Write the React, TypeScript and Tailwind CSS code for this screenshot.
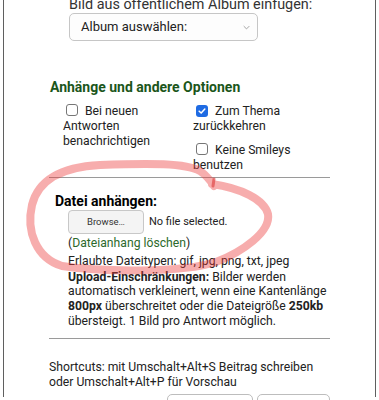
import React from 'react';

function Box({ checked = false }: { checked?: boolean }) {
  return checked ? (
    <span className="mr-[7px] ml-[3px] inline-flex h-[12px] w-[12px] items-center justify-center rounded-[3px] bg-[#1f6be3] align-[-1px]">
      <svg viewBox="0 0 12 12" className="h-[10px] w-[10px]" fill="none">
        <path d="M2.6 6.2 5 8.5 9.4 3.6" stroke="white" strokeWidth="1.8" strokeLinecap="round" strokeLinejoin="round" />
      </svg>
    </span>
  ) : (
    <span className="mr-[7px] ml-[3px] inline-block h-[12px] w-[12px] rounded-[3px] border border-[#767676] bg-white align-[-1px]" />
  );
}

export default function App() {
  return (
    <div className="relative h-[400px] w-[379px] overflow-hidden bg-white font-['Roboto',sans-serif] text-[#222]">
      <div className="ml-[3px] h-full w-[373px] border-x border-[#5f5f5f]">
        {/* Album picker */}
        <div className="-mt-[3px] pl-[65px]">
          <p className="text-[14.4px] leading-[16px] text-[#333]">Bild aus öffentlichem Album einfügen:</p>
          <div className="flex h-[28px] w-[189px] items-center justify-between rounded-[5px] border border-[#c6c6c6] bg-[#fdfdfd] pr-[7px] pl-[11px] text-[13px] text-[#222]">
            <span>Album auswählen:</span>
            <svg viewBox="0 0 10 6" className="h-[5px] w-[7px]" fill="none">
              <path d="M1 1l4 4 4-4" stroke="#9a9a9a" strokeWidth="1.3" />
            </svg>
          </div>
        </div>

        {/* Options */}
        <h3 className="mt-[38px] pl-[46px] text-[14px] leading-[17px] font-bold text-[#1b561b]">Anhänge und andere Optionen</h3>
        <div className="mt-[8px] flex pl-[59px] text-[12.2px] leading-[15px]">
          <div className="w-[130px]">
            <Box />Bei neuen<br />Antworten<br />benachrichtigen
          </div>
          <div className="w-[130px]">
            <div>
              <Box checked />Zum Thema<br />zurückkehren
            </div>
            <div className="mt-[9px]">
              <Box />Keine Smileys<br />benutzen
            </div>
          </div>
        </div>
        <div className="mt-[4px] ml-[45px] h-px w-[281px] bg-[#9a9a9a]" />

        {/* Attachment */}
        <h3 className="mt-[15px] pl-[51px] text-[14px] leading-[17px] font-bold text-black">Datei anhängen:</h3>
        <div className="flex items-center gap-[5px] pl-[64px]">
          <button className="h-[24px] w-[76px] rounded-[4px] border border-[#c8c8c8] bg-[#f4f4f4] text-[9.5px] text-[#333]">Browse…</button>
          <span className="text-[11px]">No file selected.</span>
        </div>
        <div className="pl-[64px] text-[12.2px] leading-[15px]">
          <p className="mt-[1.5px]">
            (<span className="text-[#2c6a2c]">Dateianhang löschen</span>)
          </p>
          <p className="mt-[3px]">Erlaubte Dateitypen: gif, jpg, png, txt, jpeg</p>
          <p className="mt-[1px] leading-[14.7px]">
            <b>Upload-Einschränkungen:</b> Bilder werden<br />
            automatisch verkleinert, wenn eine Kantenlänge<br />
            <b>800px</b> überschreitet oder die Dateigröße <b>250kb</b><br />
            übersteigt. 1 Bild pro Antwort möglich.
          </p>
        </div>
        <div className="mt-[10px] ml-[45px] h-px w-[281px] bg-[#9a9a9a]" />

        {/* Shortcuts */}
        <p className="mt-[21px] pl-[45px] text-[12.2px] leading-[15px]">
          Shortcuts: mit Umschalt+Alt+S Beitrag schreiben<br />
          oder Umschalt+Alt+P für Vorschau
        </p>
        <div className="mt-[4px] flex gap-[4px] pl-[163px]">
          <div className="h-[20px] w-[86px] rounded-t-[5px] border border-[#bdbdbd]" />
          <div className="h-[20px] w-[73px] rounded-t-[5px] border border-[#bdbdbd]" />
        </div>
      </div>

      {/* hand-drawn annotation */}
      <svg className="pointer-events-none absolute inset-0" width="379" height="400" viewBox="0 0 379 400" fill="none">
        <path
          d="M212 184 C240 188 264 199 268 214 C271 232 242 252 216 262 C182 273 102 272 62 266 C36 258 26 231 32 205 C38 181 60 167 100 165 C150 163 186 163 200 171 C206 175 210 180 214 186"
          stroke="#eb3c3c"
          strokeOpacity="0.42"
          strokeWidth="8"
          strokeLinecap="round"
          strokeLinejoin="round"
        />
        <path d="M214 179 L213 186" stroke="#e04848" strokeOpacity="0.7" strokeWidth="3" strokeLinecap="round" />
      </svg>
    </div>
  );
}
